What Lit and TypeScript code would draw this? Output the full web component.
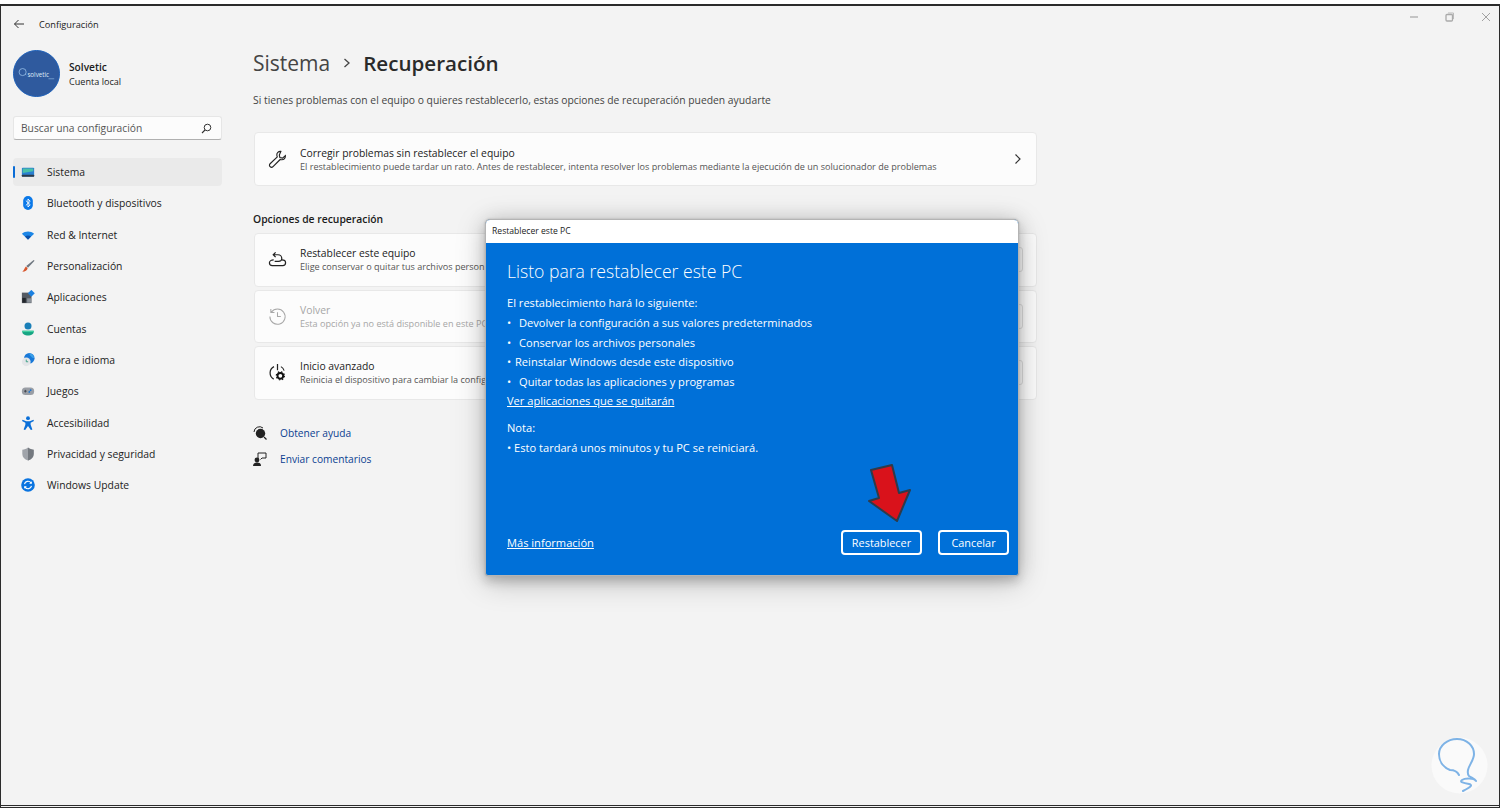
import { LitElement, html, css, svg } from "lit";
import { customElement } from "lit/decorators.js";

const nav: [string, any][] = [
  ["Sistema", svg`<rect x="1" y="3" width="14" height="10" rx="1" fill="#2a7fd0"/><path d="M2 4h12v3L2 9z" fill="#49c0a8"/><rect x="1" y="11" width="14" height="2.5" rx=".6" fill="#2b3a4a"/>`],
  ["Bluetooth y dispositivos", svg`<rect x="2.5" y="0" width="11" height="16" rx="5.5" fill="#0a78e8"/><path d="M5.5 5.2 10.5 10 8 12.6V3.4L10.5 6 5.5 10.8" fill="none" stroke="#fff" stroke-width="1"/>`],
  ["Red & Internet", svg`<path d="M1 6.5C5 3 11 3 15 6.5L8 13z" fill="#1c86e6"/><path d="M4.5 9.8C6.6 8.3 9.4 8.3 11.5 9.8L8 13.4z" fill="#0b4fa8"/>`],
  ["Personalización", svg`<path d="M14.5 1 15.5 2 8 10 6 8z" fill="#6f7780"/><path d="M5.6 8.5 7.6 10.6C7 13 5 14.5 1.5 14.5 3.6 13 3.8 10 5.6 8.5z" fill="#d8562c"/>`],
  ["Aplicaciones", svg`<rect x="1" y="3" width="11" height="12" fill="#555b63"/><rect x="1.5" y="9" width="4" height="5.5" fill="#22262b"/><rect x="7" y="9.5" width="4.5" height="5" fill="#8a9199"/><rect x="9" y="1" width="5.6" height="5.6" fill="#1b80e0" transform="rotate(45 11.8 3.8)"/>`],
  ["Cuentas", svg`<circle cx="8" cy="4.6" r="4" fill="#1a7fb8"/><path d="M1.5 10h13v1.5c0 2.6-3 4-6.5 4s-6.5-1.4-6.5-4z" fill="#17a584"/><path d="M1.5 10h13v1.5H1.5z" fill="#3fcf9f"/>`],
  ["Hora e idioma", svg`<circle cx="9.5" cy="6" r="6" fill="#1878d8"/><path d="M9 .5a6 6 0 0 1 6 5c-2 1-3-1-4-2z" fill="#3aa0e8"/><circle cx="6" cy="10" r="5" fill="#e3e5e8"/><path d="M6 7.5V10h2.2" fill="none" stroke="#2f9a7e" stroke-width="1"/>`],
  ["Juegos", svg`<rect x="1" y="4" width="14" height="8.5" rx="4" fill="#9a9ea5"/><circle cx="11" cy="7" r="1" fill="#1673d2"/><circle cx="9.5" cy="9" r="1" fill="#1673d2"/><path d="M3.5 8.2h3M5 6.7v3" stroke="#3a4048" stroke-width="1"/>`],
  ["Accesibilidad", svg`<circle cx="8" cy="2.5" r="2.2" fill="#0a6fd8"/><path d="M1.8 4.3 6 6h4l4.2-1.7.6 1.5L11 7.8V10l2 5.500-1.700.6L8 11.500 4.700 16.100 3 15.500 5 10V7.800L1.200 5.800z" fill="#0a6fd8"/>`],
  ["Privacidad y seguridad", svg`<path d="M8 .5c2 1.6 4 2.3 6.5 2.5v5c0 3.5-2.500 6-6.500 7.500C4 14 1.500 11.500 1.500 8V3C4 2.800 6 2.100 8 .5z" fill="#a0a4aa"/><path d="M8 .5c2 1.6 4 2.3 6.5 2.5v5c0 3.5-2.500 6-6.500 7.500z" fill="#74797f"/>`],
  ["Windows Update", svg`<circle cx="8" cy="8" r="7.800" fill="#0a74e0"/><path d="M4 7a4.200 4.200 0 0 1 7.300-1.800L12 6M12 9a4.200 4.200 0 0 1-7.300 1.800L4 10" fill="none" stroke="#fff" stroke-width="1.300"/><path d="M12.300 3.600V6.600H9.300zM3.700 12.400V9.400H6.700z" fill="#fff"/>`],
];

const rows: [string, string, any, boolean][] = [
  ["Restablecer este equipo", "Elige conservar o quitar tus archivos person", svg`<path d="M6 10.500c-2.500 0-4.500 1-4.500 3s1.500 3 3 3h11c1.500 0 3-1 3-3s-1.500-3-4-3" fill="none" stroke="#222" stroke-width="1.300"/><path d="M5.500 5h5c2.500 0 4 2 4 4s-1.500 3-3.500 3H7M8 2.500 5.500 5 8 7.500" fill="none" stroke="#222" stroke-width="1.300"/>`, false],
  ["Volver", "Esta opción ya no está disponible en este PC", svg`<path d="M3.500 5.500A8 8 0 1 1 2 10M3 2v3.800h3.800M10 5.500V10h3.500" fill="none" stroke="#a8a8a8" stroke-width="1.100"/>`, true],
  ["Inicio avanzado", "Reinicia el dispositivo para cambiar la config", svg`<path d="M10 1v6.500M6.300 3.800A7.500 7.500 0 0 0 6 17" fill="none" stroke="#222" stroke-width="1.300"/><path d="M13.600 3.800A7.500 7.500 0 0 1 17 8" fill="none" stroke="#222" stroke-width="1.100"/><circle cx="13" cy="13.500" r="3" fill="none" stroke="#111" stroke-width="2"/><circle cx="13" cy="13.500" r="4.300" fill="none" stroke="#111" stroke-width="1.200" stroke-dasharray="1.500 1.900"/>`, false],
];

const list = [
  "Devolver la configuración a sus valores predeterminados",
  "Conservar los archivos personales",
  "Reinstalar Windows desde este dispositivo",
  "Quitar todas las aplicaciones y programas",
];

@customElement("app-root")
export class AppRoot extends LitElement {
  static styles = css`
    :host { display: block; width: 1500px; height: 812px; background: #fff; overflow: hidden; position: relative;
      font-family: "Open Sans", "Noto Sans", sans-serif; color: #1b1b1b; }
    * { box-sizing: border-box; }
    .win { margin-top: 4px; height: 804px; background: #f3f3f3; border: solid #2b2b2b; border-width: 2px 1px 0 1px; border-bottom: 3px double #2b2b2b; display: flex; flex-direction: column; }
    .top { height: 36px; display: flex; align-items: center; padding-left: 12px; flex: none; }
    .top .cfg { margin-left: 14px; font-size: 9.2px; }
    .caps { margin-left: auto; display: flex; gap: 26px; padding-right: 8px; align-items: center; margin-top: -14px; }
    .main { display: flex; flex: 1; min-height: 0; }
    .side { width: 221px; flex: none; padding-left: 12px; }
    .user { display: flex; align-items: center; gap: 9px; height: 48px; margin-top: 7px; }
    .avatar { width: 47px; height: 47px; border-radius: 50%; background: #2f5a9e; border: 1px solid #1c5fb8; flex: none; display: block; }
    .uname { font-size: 10.2px; font-weight: 600; line-height: 14px; margin-top: 2px; }
    .usub { font-size: 9.1px; line-height: 15px; }
    .search { margin-top: 19px; height: 24px; width: 209px; background: #fcfcfc; border: 1px solid #e6e6e6; border-bottom-color: #b0b0b0; border-radius: 3px; display: flex; align-items: center; justify-content: space-between; padding: 0 9px 0 7px; font-size: 10.25px; color: #555; }
    nav { margin-top: 18px; display: flex; flex-direction: column; gap: 3.33px; width: 209px; }
    .item { height: 28px; display: flex; align-items: center; border-radius: 4px; font-size: 10.35px; position: relative; padding-left: 8px; gap: 12px; color: #222; }
    .item svg { width: 14px; height: 14px; flex: none; }
    .item.on { background: #eaeaea; }
    .item.on::before { content: ""; position: absolute; left: 0; top: 8px; height: 12px; width: 2px; background: #0a6cd6; border-radius: 1px; }
    .content { flex: 1; padding-left: 31px; }
    .crumb { display: flex; align-items: center; font-size: 20.6px; font-weight: 600; height: 30px; margin-top: 6px; color: #2a2a2a; }
    .crumb .a { color: #444; font-weight: 500; font-size: 21px; }
    .crumb svg { margin: 0 12.5px; }
    .intro { font-size: 10.34px; margin-top: 15px; line-height: 14px; color: #444; }
    .card { width: 783px; margin-left: 1px; background: #fcfcfc; border: 1px solid #e8e8e8; border-radius: 4px; display: flex; align-items: center; padding-left: 13px; gap: 13px; height: 54px; }
    .card svg.ic { width: 19px; height: 19px; flex: none; }
    .t1 { font-size: 10.35px; line-height: 14px; color: #222; }
    .t2 { font-size: 9.08px; line-height: 13px; color: #555; white-space: nowrap; }
    .first { margin-top: 25px; justify-content: flex-start; }
    .first .chev { margin-left: auto; margin-right: 14px; }
    .h { font-size: 10.35px; font-weight: 600; margin-top: 26px; line-height: 14px; margin-bottom: 7px; }
    .group { display: flex; flex-direction: column; gap: 3px; }
    .group .card { height: 53.5px; }
    .peek { margin-left: auto; margin-right: 13px; width: 80px; height: 25px; border: 1px solid #dedede; border-radius: 3px; background: #fbfbfb; }
    .dis .t1, .dis .t2 { color: #a6a6a6; }
    .links { margin-top: 25px; display: flex; flex-direction: column; gap: 9px; }
    .link { display: flex; align-items: center; gap: 13px; height: 17px; font-size: 10.2px; color: #0b3f91; }
    .link svg { width: 14px; height: 14px; flex: none; }
    .dlg { position: absolute; left: 485px; top: 219px; width: 534px; height: 357px; background: #0070d8; border: 1px solid #b4b4b4; border-radius: 5px 5px 3px 3px;
      box-shadow: 0 0 2px #aaa, 0 6px 10px rgba(0,0,0,.14), 0 6px 30px rgba(0,0,0,.22), 0 0 20px rgba(0,0,0,.1); display: flex; flex-direction: column; color: #fff; }
    .bar { height: 23px; background: #fff; color: #222; font-size: 8.6px; line-height: 23px; padding-left: 6px; flex: none; border-radius: 4px 4px 0 0; }
    .body { flex: 1; padding: 16px 9px 0 21px; display: flex; flex-direction: column; }
    .dt { font-size: 17.6px; line-height: 24px; font-weight: 300; }
    .lines { margin-top: 10.4px; font-size: 11.1px; }
    .lines div { height: 19.6px; line-height: 19.6px; white-space: nowrap; }
    .lines .b { padding-left: 12px; position: relative; }
    .lines .b::before { content: "•"; position: absolute; left: 0; }
    .lines .tight { padding-left: 8px; }
    a { color: inherit; text-decoration: underline; }
    .note { margin-top: 7px; }
    .foot { margin-top: auto; display: flex; align-items: center; height: 27px; margin-bottom: 19px; font-size: 11.1px; }
    .btn { height: 25px; border: 2px solid #fff; border-radius: 4px; display: flex; align-items: center; justify-content: center; font-size: 10.9px; }
    .b1 { margin-left: auto; width: 81px; }
    .b2 { margin-left: 16px; width: 71px; }
    .arrow { position: absolute; left: 866px; top: 463px; width: 48px; height: 62px; }
    .wm { position: absolute; left: 1431px; top: 737px; width: 57px; height: 57px; }
  `;

  render() {
    return html`
      <div class="win">
        <div class="top">
          <svg width="12" height="12" viewBox="0 0 12 12"><path d="M11 6H1.5M5.5 2 1.5 6l4 4" fill="none" stroke="#333" stroke-width="1"/></svg>
          <span class="cfg">Configuración</span>
          <div class="caps">
            <svg width="10" height="10" viewBox="0 0 10 10"><path d="M1 5h8" stroke="#aaa" stroke-width="1.3"/></svg>
            <svg width="10" height="10" viewBox="0 0 10 10"><rect x="1" y="2.5" width="6.5" height="6.5" rx="1" fill="none" stroke="#aaa" stroke-width="1.3"/><path d="M3 1h5.500v6" fill="none" stroke="#bbb"/></svg>
            <svg width="10" height="10" viewBox="0 0 10 10"><path d="M1 1l8 8M9 1 1 9" stroke="#999" stroke-width=".9"/></svg>
          </div>
        </div>
        <div class="main">
          <div class="side">
            <div class="user">
              <svg class="avatar" viewBox="0 0 47 47"><circle cx="9" cy="22" r="3.7" fill="none" stroke="#9cc3ea" stroke-width=".8"/><text x="14" y="27" font-size="6.5" fill="#dfeaf6" font-family="Open Sans">solvetic</text><path d="M13 25 11.500 24M36 29h6" stroke="#9cc3ea" stroke-width=".6" fill="none"/></svg>
              <div><div class="uname">Solvetic</div><div class="usub">Cuenta local</div></div>
            </div>
            <div class="search">
              <span>Buscar una configuración</span>
              <svg width="11" height="11" viewBox="0 0 11 11"><circle cx="6.5" cy="4.5" r="3.3" fill="none" stroke="#333" stroke-width="1"/><path d="M4 7 1 10" stroke="#333" stroke-width="1.1"/></svg>
            </div>
            <nav>
              ${nav.map(([n, i], idx) => html`<div class="item ${idx === 0 ? "on" : ""}"><svg viewBox="0 0 16 16">${i}</svg><span>${n}</span></div>`)}
            </nav>
          </div>
          <div class="content">
            <div class="crumb">
              <span class="a">Sistema</span>
              <svg width="8" height="12" viewBox="0 0 8 12"><path d="M1.5 2 6 6l-4.500 4" fill="none" stroke="#444" stroke-width="1.3"/></svg>
              <span>Recuperación</span>
            </div>
            <div class="intro">Si tienes problemas con el equipo o quieres restablecerlo, estas opciones de recuperación pueden ayudarte</div>
            <div class="card first">
              <svg class="ic" viewBox="0 0 20 20"><path d="M13.5 1.500c-2.500-.4-4.500 1.600-4.200 4 .1.700.3 1.200.5 1.700L2.200 14.500c-.9.900-.9 2.200 0 3.100.9.900 2.200.9 3.100 0l7.500-7.600c.6.200 1.100.3 1.700.3 2.400 0 4.100-2 3.800-4.400l-3 2.700-2.800-.6-.6-2.800z" fill="none" stroke="#222" stroke-width="1.2"/></svg>
              <div>
                <div class="t1">Corregir problemas sin restablecer el equipo</div>
                <div class="t2">El restablecimiento puede tardar un rato. Antes de restablecer, intenta resolver los problemas mediante la ejecución de un solucionador de problemas</div>
              </div>
              <svg class="chev" width="8" height="12" viewBox="0 0 8 12"><path d="M1.5 1.500 6 6l-4.500 4.500" fill="none" stroke="#333" stroke-width="1.2"/></svg>
            </div>
            <div class="h">Opciones de recuperación</div>
            <div class="group">
              ${rows.map(([a, b, i, d]) => html`
                <div class="card ${d ? "dis" : ""}">
                  <svg class="ic" viewBox="0 0 20 20">${i}</svg>
                  <div><div class="t1">${a}</div><div class="t2">${b}</div></div>
                  <div class="peek"></div>
                </div>`)}
            </div>
            <div class="links">
              <div class="link"><svg viewBox="0 0 14 14"><path d="M1 6a5.500 5.500 0 0 1 9-4" fill="none" stroke="#222"/><circle cx="7.5" cy="7.5" r="4.700" fill="#222"/><path d="M11 11l2.500 2.500" stroke="#222" stroke-width="1.3"/></svg><span>Obtener ayuda</span></div>
              <div class="link"><svg viewBox="0 0 14 14"><circle cx="4" cy="8" r="2.4" fill="#222"/><path d="M0 14c0-2.500 1.500-3.400 4-3.400s4 .9 4 3.400z" fill="#222"/><path d="M5 6V1h8v5H9L7.500 7.500" fill="none" stroke="#222"/></svg><span>Enviar comentarios</span></div>
            </div>
          </div>
        </div>
      </div>
      <div class="dlg">
        <div class="bar">Restablecer este PC</div>
        <div class="body">
          <div class="dt">Listo para restablecer este PC</div>
          <div class="lines">
            <div>El restablecimiento hará lo siguiente:</div>
            ${list.map((l, i) => html`<div class="b ${i === 2 ? "tight" : ""}">${l}</div>`)}
            <div><a>Ver aplicaciones que se quitarán</a></div>
            <div class="note">Nota:</div>
            <div>• Esto tardará unos minutos y tu PC se reiniciará.</div>
          </div>
          <div class="foot">
            <a>Más información</a>
            <div class="btn b1">Restablecer</div>
            <div class="btn b2">Cancelar</div>
          </div>
        </div>
      </div>
      <svg class="arrow" viewBox="0 0 48 62"><path d="M5 7 26 2 33 30 44 27 31 58 3 38 13 35z" fill="#d9121b" stroke="#2e3b4a" stroke-width="2" stroke-linejoin="round"/></svg>
      <svg class="wm" viewBox="0 0 57 57"><circle cx="28.5" cy="28.5" r="28" fill="#fafafa"/><path d="M28 38C26 34 22 33 19 33 14 31 8 26 8 17 8 9 16 2 26 2 36 2 43 9 43 17 43 23 38 28 37 33 36.500 36 37 38 38 39 41 41 44 42 45 44 43 41 34 41 31 43 28 45 33 46 38 47 42 48 40 50 32 54" fill="none" stroke="#7eb3e6" stroke-width="2" stroke-linecap="round" stroke-linejoin="round"/></svg>
    `;
  }
}
